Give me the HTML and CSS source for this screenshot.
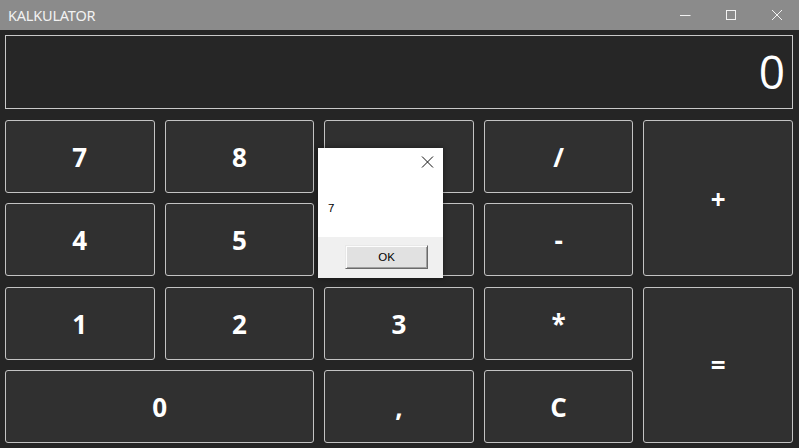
FILE: index.html
```html
<!DOCTYPE html>
<html lang="pl">
<head>
<meta charset="utf-8">
<title>KALKULATOR</title>
<link rel="stylesheet" href="styles.css">
</head>
<body>
<div class="window">
  <div class="titlebar">
    <span class="title">KALKULATOR</span>
    <div class="controls">
      <span class="ctl">
        <svg width="12" height="12" viewBox="0 0 12 12"><path d="M1 6.5H11.5" stroke="#f2f2f2" stroke-width="1" fill="none"/></svg>
      </span>
      <span class="ctl">
        <svg width="12" height="12" viewBox="0 0 12 12"><rect x="1.5" y="1.5" width="9" height="9" stroke="#f2f2f2" stroke-width="1" fill="none"/></svg>
      </span>
      <span class="ctl">
        <svg width="12" height="12" viewBox="0 0 12 12"><path d="M1 1L11 11M11 1L1 11" stroke="#f2f2f2" stroke-width="1" fill="none"/></svg>
      </span>
    </div>
  </div>
  <div class="main">
    <div class="display">0</div>
    <div class="keys">
      <button class="key">7</button>
      <button class="key">8</button>
      <button class="key" aria-label="9"></button>
      <button class="key">/</button>
      <button class="key tall">+</button>
      <button class="key">4</button>
      <button class="key">5</button>
      <button class="key" aria-label="6"></button>
      <button class="key">-</button>
      <button class="key">1</button>
      <button class="key">2</button>
      <button class="key">3</button>
      <button class="key">*</button>
      <button class="key tall">=</button>
      <button class="key wide">0</button>
      <button class="key">,</button>
      <button class="key">C</button>
    </div>
  </div>
  <div class="dialog">
    <div class="dlg-body">
      <div class="dlg-top">
        <svg class="dlg-close" width="13" height="12" viewBox="0 0 13 12"><path d="M1 0.5L12 11.5M12 0.5L1 11.5" stroke="#111" stroke-width="1" fill="none"/></svg>
      </div>
      <div class="dlg-msg">7</div>
    </div>
    <div class="dlg-foot">
      <button class="ok">OK</button>
    </div>
  </div>
</div>
</body>
</html>
```

FILE: styles.css
```css
* { box-sizing: border-box; }
html, body { margin: 0; padding: 0; }
body {
  width: 799px;
  height: 448px;
  overflow: hidden;
  background: #252525;
  font-family: "Open Sans", "Noto Sans", sans-serif;
}
.window {
  position: relative;
  width: 799px;
  height: 448px;
  display: flex;
  flex-direction: column;
  background: #252525;
}
.titlebar {
  height: 30px;
  flex: none;
  background: #8b8b8b;
  display: flex;
  align-items: center;
  justify-content: space-between;
}
.title {
  padding-left: 8px;
  color: #f2f2f2;
  font-size: 14.5px;
  letter-spacing: -0.2px;
  font-family: "Noto Sans", "Open Sans", sans-serif;
}
.controls {
  display: flex;
  height: 30px;
}
.ctl {
  width: 46px;
  height: 30px;
  display: flex;
  align-items: center;
  justify-content: center;
}
.ctl:last-child { width: 45px; }
.main {
  flex: 1;
  display: flex;
  flex-direction: column;
  padding: 5px 6px 5px 5px;
  gap: 11px;
}
.display {
  height: 74px;
  flex: none;
  border: 1px solid #c9c9c9;
  background: #262626;
  color: #ffffff;
  font-size: 46px;
  text-align: right;
  padding: 0 7px 0 0;
  line-height: 70px;
  font-family: "Open Sans", sans-serif;
}
.keys {
  flex: 1;
  display: grid;
  grid-template-columns: repeat(5, 1fr);
  grid-template-rows: repeat(4, 1fr);
  column-gap: 10px;
  row-gap: 10.5px;
}
.key {
  background: #303030;
  border: 1px solid #c3c3c3;
  border-radius: 3px;
  color: #ffffff;
  font-family: "Open Sans", sans-serif;
  font-weight: 700;
  font-size: 26px;
  padding: 1px 0 0 0;
  margin: 0;
}
.tall { grid-row: span 2; }
.wide { grid-column: span 2; }
.dialog {
  position: absolute;
  left: 318px;
  top: 148px;
  width: 125px;
  height: 130px;
  background: #ffffff;
  display: flex;
  flex-direction: column;
  box-shadow: 0 0 6px rgba(0,0,0,0.45);
}
.dlg-body {
  flex: 1;
  display: flex;
  flex-direction: column;
}
.dlg-top {
  height: 30px;
  display: flex;
  justify-content: flex-end;
  align-items: flex-start;
  padding: 8px 9px 0 0;
}
.dlg-msg {
  padding-left: 10px;
  padding-top: 24px;
  font-size: 11.5px;
  color: #000;
  font-family: "Liberation Sans", sans-serif;
}
.dlg-foot {
  height: 41px;
  background: #f0f0f0;
  display: flex;
  justify-content: flex-start;
  padding: 8px 0 0 27px;
}
.ok {
  width: 83px;
  height: 24px;
  margin: 0;
  padding: 0;
  background: #e1e1e1;
  border: 1px solid;
  border-color: #e8e8e8 #6a6a6a #6a6a6a #e8e8e8;
  box-shadow: inset 1px 1px 0 #fdfdfd, inset -1px -1px 0 #a0a0a0;
  font-family: "Liberation Sans", sans-serif;
  font-size: 11.5px;
  color: #000;
}
```
